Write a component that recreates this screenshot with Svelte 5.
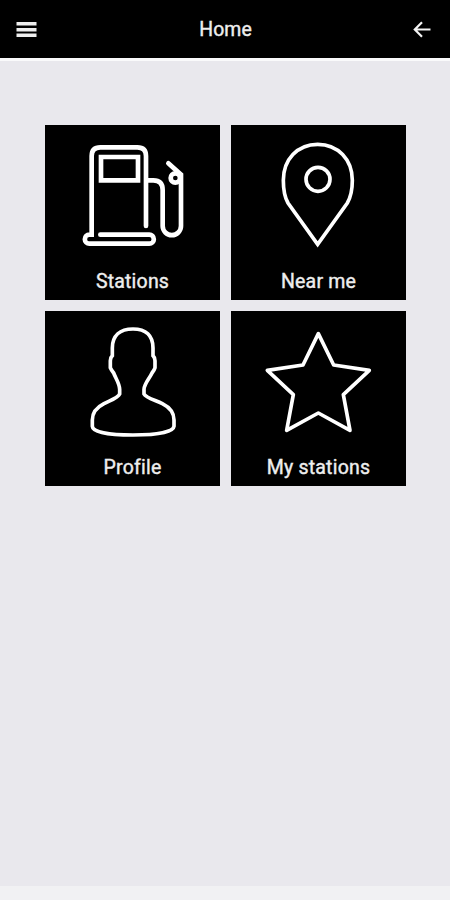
<script lang="ts">
  interface Tile {
    id: string;
    label: string;
    viewBox: string;
    width: number;
    paths: string[];
  }

  const tiles: Tile[] = [
    {
      id: 'stations',
      label: 'Stations',
      viewBox: '15 15 525 405',
      width: 14,
      paths: [
        'M318 318V108Q318 82 292 82H181Q155 82 155 108V344H148A13.5 13.5 0 0 0 148 371H328A13.5 13.5 0 0 0 328 344H181',
        'M183 111H294V181H183Z',
        'M320 181H340Q368 181 368 210V318A27.5 27.5 0 0 0 423 318V164L385 130',
        'M392 174A14 14 0 1 0 420 174A14 14 0 1 0 392 174Z'
      ]
    },
    {
      id: 'near',
      label: 'Near me',
      viewBox: '15 15 525 405',
      width: 11,
      paths: [
        'M275 373L186 249C176 232 172 210 172 181C172 119 214 73 275 73S379 119 379 181C379 210 374 232 364 249Z',
        'M240 178A36 36 0 1 0 312 178A36 36 0 1 0 240 178Z'
      ]
    },
    {
      id: 'profile',
      label: 'Profile',
      viewBox: '15 17 525 405',
      width: 11,
      paths: [
        'M279 71C240 71 217 91 217 128V151Q211 157 211 166V187Q214 194 221 203C227 219 239 235 239 252V266C234 278 211 285 192 295C168 307 157 322 157 344V363C158 380 205 389 279 389S400 380 402 363V344C402 322 391 307 367 295C348 285 318 278 312 266V252C313 235 329 219 336 203Q343 194 345 187V166Q345 157 339 151V128C339 91 318 71 279 71Z'
      ]
    },
    {
      id: 'favourites',
      label: 'My stations',
      viewBox: '15 17 525 405',
      width: 11,
      paths: ['M277 85L323 179L430 195L352 268L372 375L277 323L182 375L202 268L124 195L231 179Z']
    }
  ];
</script>

<div class="screen">
  <header class="bar">
    <button class="icon-button" aria-label="Menu">
      <svg width="21" height="16" viewBox="0 0 21 16">
        <path d="M0.5 2.7H20.5M0.5 8.7H20.5M0.5 14.2H20.5" stroke="#eee" stroke-width="3.4" />
      </svg>
    </button>
    <h1>Home</h1>
    <button class="icon-button" aria-label="Back">
      <svg width="18" height="18" viewBox="0 0 18 18" fill="none">
        <path d="M17.5 9.5H2M9 2.2L1.8 9.5L9 16.7" stroke="#f4f4f4" stroke-width="2.2" />
      </svg>
    </button>
  </header>

  <main class="grid">
    {#each tiles as tile (tile.id)}
      <button class="tile">
        <svg
          class="picture"
          class:rounded={tile.id === 'favourites'}
          viewBox={tile.viewBox}
          stroke-width={tile.width}
          aria-hidden="true"
        >
          {#each tile.paths as d}
            <path {d} />
          {/each}
        </svg>
        <span class="label">{tile.label}</span>
      </button>
    {/each}
  </main>

  <footer class="bottom"></footer>
</div>

<style>
  :global(body) {
    background: #e9e8ed;
  }

  .screen {
    display: flex;
    flex-direction: column;
    height: 100vh;
    font-family: Roboto, "Liberation Sans", sans-serif;
    background: #e9e8ed;
  }

  button {
    border: 0;
    padding: 0;
    font: inherit;
    color: inherit;
  }

  .bar {
    box-sizing: border-box;
    display: grid;
    grid-template-columns: 40px 1fr 40px;
    align-items: center;
    height: 61px;
    padding: 0 19px 0 16px;
    border-bottom: 3px solid #fafafb;
    background: #000;
    color: #eee;
  }

  .icon-button {
    display: flex;
    align-items: center;
    height: 40px;
    background: none;
    cursor: pointer;
  }

  .icon-button:last-child {
    justify-content: flex-end;
  }

  h1 {
    margin: 0;
    padding: 1px 0 0 4px;
    font-size: 19.4px;
    font-weight: 400;
    line-height: 24px;
    letter-spacing: 0.1px;
    text-align: center;
    -webkit-text-stroke: 0.4px;
  }

  .grid {
    flex: 1;
    display: grid;
    grid-template-columns: 175px 175px;
    grid-auto-rows: 175px;
    gap: 11px;
    padding: 64px 44px 0 45px;
  }

  .tile {
    display: flex;
    flex-direction: column;
    align-items: center;
    background: #000;
    color: #eee;
    cursor: pointer;
  }

  .picture {
    display: block;
    width: 175px;
    height: 135px;
    fill: none;
    stroke: #fff;
    stroke-linecap: round;
    stroke-linejoin: miter;
  }

  .picture.rounded {
    stroke-linejoin: round;
  }

  .label {
    margin-top: 10px;
    font-size: 19.5px;
    font-weight: 400;
    line-height: 24px;
    letter-spacing: 0.2px;
    -webkit-text-stroke: 0.4px;
  }

  .bottom {
    height: 14px;
    background: #f1f1f3;
  }
</style>
